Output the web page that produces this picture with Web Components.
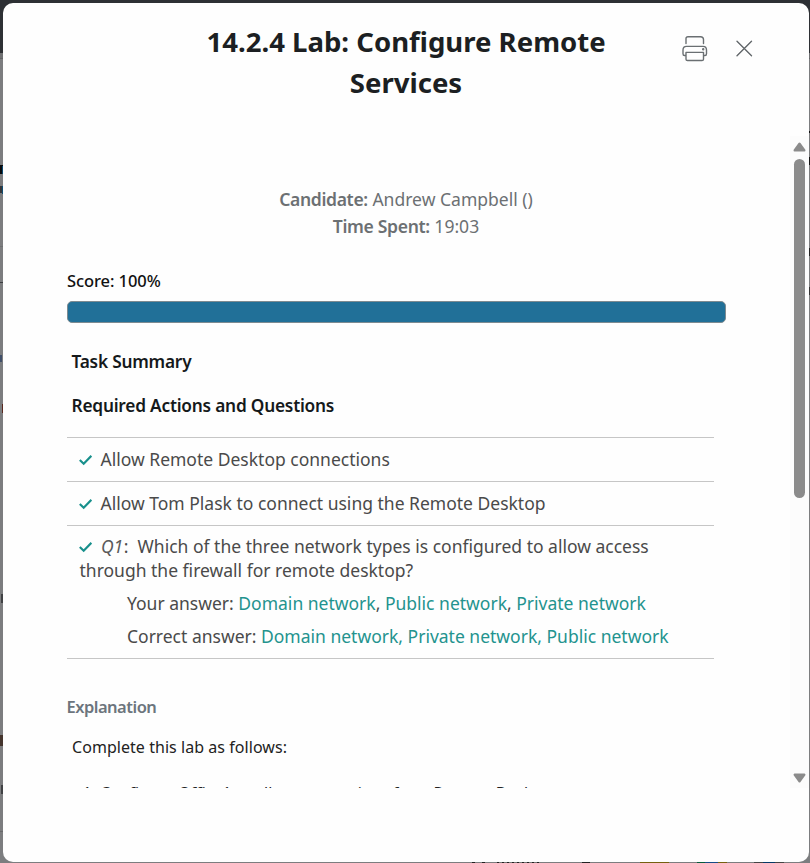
<!DOCTYPE html>
<html lang="en"><head><meta charset="utf-8"><title>Lab report</title>
<style>
html,body{margin:0;height:100%;overflow:hidden}
body{font-family:"Noto Sans","Open Sans",sans-serif;color:#111418}
lab-backdrop{width:810px;height:863px}
</style></head><body>
<lab-backdrop><lab-dialog>
<span slot="title">14.2.4 Lab: Configure Remote Services</span>
<candidate-info></candidate-info>
<score-bar></score-bar>
<task-summary>
<task-row>Allow Remote Desktop connections</task-row>
<task-row>Allow Tom Plask to connect using the Remote Desktop</task-row>
<question-row></question-row>
</task-summary>
<lab-explanation></lab-explanation>
</lab-dialog></lab-backdrop>
<script>
function define(name, html){
  customElements.define(name, class extends HTMLElement{
    constructor(){ super(); this.attachShadow({mode:'open'}).innerHTML = html; }
  });
}
define('lab-backdrop', `<style>
:host{display:block;position:relative;box-sizing:border-box;padding:3px 1px 1px 3px;overflow:hidden;
 background:linear-gradient(#2d3034 0 53px,#707173 53px 58px,#626365 58px 59px,#7c7d7f 59px)}
i{position:absolute;display:block}
</style>
<i style="left:0;top:165px;width:3px;height:9px;background:#080a0d"></i>
<i style="left:2px;top:166px;width:1px;height:8px;background:#08476e"></i>
<i style="left:0;top:186px;width:2px;height:7px;background:#34363a"></i>
<i style="left:2px;top:186px;width:1px;height:8px;background:#104e72"></i>
<i style="left:0;top:246px;width:3px;height:1px;background:#6e7072"></i>
<i style="left:0;top:282px;width:3px;height:1px;background:#3c3e40"></i>
<i style="left:0;top:355px;width:2px;height:7px;background:#404f69"></i>
<i style="left:2px;top:404px;width:1px;height:9px;background:#59271e"></i>
<i style="left:1px;top:594px;width:2px;height:9px;background:#404144"></i>
<i style="left:0;top:735px;width:3px;height:11px;background:#44352d"></i>
<i style="left:1px;top:785px;width:2px;height:9px;background:#404144"></i>
<i style="left:0;top:831px;width:3px;height:1px;background:#68696b"></i>
<i style="right:0;top:131px;width:1px;height:2px;background:#111"></i>
<i style="right:0;top:157px;width:1px;height:8px;background:#111"></i>
<i style="right:0;top:248px;width:1px;height:8px;background:#222"></i>
<i style="right:0;top:287px;width:1px;height:8px;background:#333"></i>
<i style="left:472px;bottom:0;width:3px;height:1px;background:#222"></i>
<i style="left:482px;bottom:0;width:3px;height:1px;background:#222"></i>
<i style="left:497px;bottom:0;width:42px;height:1px;background:repeating-linear-gradient(90deg,#222 0 2px,#777 2px 5px)"></i>
<i style="left:582px;bottom:0;width:8px;height:1px;background:#222"></i>
<i style="left:640px;bottom:0;width:29px;height:1px;background:#75600f"></i>
<i style="left:697px;bottom:0;width:8px;height:1px;background:#075c3b"></i>
<i style="left:705px;bottom:0;width:13px;height:1px;background:#174c86"></i>
<i style="left:718px;bottom:0;width:9px;height:1px;background:#75600f"></i>
<i style="left:754px;bottom:0;width:30px;height:1px;background:linear-gradient(90deg,#444 0 9px,#063966 9px 21px,#444 21px)"></i>
<slot></slot>`);
define('lab-dialog', `<style>
:host{display:flex;flex-direction:column;position:relative;box-sizing:border-box;height:859px;background:#fefefe;border-radius:10px;overflow:hidden}
header{display:grid;grid-template-columns:1fr 430px 1fr;height:133px;flex:none}
h1{grid-column:2;margin:18px 0 0;text-align:center;font-size:27.55px;line-height:41px;font-weight:700;color:#1c1f22}
nav{display:flex;gap:26px;padding:32px 0 0 60px}
main{display:flex;height:652px;flex:none}
section{flex:1;padding-left:64px;overflow:hidden}
</style>
<header><h1><slot name="title"></slot></h1><nav><print-icon></print-icon><close-icon></close-icon></nav></header>
<main><section><slot></slot></section><scroll-track></scroll-track></main>`);
define('print-icon', `<style>:host{display:block}svg{display:block}</style>
<svg width="28" height="28" viewBox="0 0 28 28" fill="none" stroke="#6a6f72" stroke-width="1.4" stroke-linecap="round" stroke-linejoin="round"><path d="M5 8.5V3.5Q5 1.7 7 1.7H19.5Q22.5 1.7 22.5 4.5V8.5M5 20.5H3.5Q2 20.5 2 18.7V15Q2 11.4 5.5 11.4H22Q25.5 11.4 25.5 15V18.7Q25.5 20.5 24 20.5H22.5M5 17.4H22.5V24.3Q22.5 25.5 21 25.5H6.5Q5 25.5 5 24.3Z"/><circle cx="22.2" cy="14.3" r=".5" fill="#6a6f72"/></svg>`);
define('close-icon', `<style>:host{display:block;padding-top:5px}svg{display:block}</style>
<svg width="18" height="18" viewBox="0 0 18 18" stroke="#63686b" stroke-width="1.4" stroke-linecap="round"><path d="M2 1.2 16.5 15.7M16.5 1.2 2 15.7"/></svg>`);
define('scroll-track', `<style>
:host{display:flex;flex-direction:column;align-items:center;width:19px;box-sizing:border-box;background:#fcfcfc;padding:6px 0 5px}
div{width:11px;height:339px;border-radius:6px;background:#8b8b8b;margin-top:7px}
svg{display:block}.d{margin-top:auto}</style>
<svg width="13" height="10"><path d="M5.5 1Q6.5 0 7.5 1L12.5 8Q12.5 9.5 11.5 9.5H1.5Q.5 9.5 .5 8Z" fill="#8b8b8b"/></svg><div></div>
<svg class="d" width="13" height="10"><path d="M5.5 9Q6.5 10 7.5 9L12.5 2Q12.5 .5 11.5 .5H1.5Q.5 .5 .5 2Z" fill="#8b8b8b"/></svg>`);
define('candidate-info', `<style>
:host{display:block;width:678px;text-align:center;padding-top:50px;font-size:17.55px;line-height:27px;color:#6c7073}
b{font-weight:600;letter-spacing:-.33px}</style>
<div><b>Candidate:</b> Andrew Campbell ()</div><div><b>Time Spent:</b> 19:03</div>`);
define('score-bar', `<style>
:host{display:block;padding-top:28px}p{margin:0 0 8px;font-size:16.5px;line-height:25px;font-weight:500;letter-spacing:-.08px;color:#111}
div{width:659px;height:22px;box-sizing:border-box;border:1px solid #7e8b91;border-radius:5px;background:#217098}</style>
<p>Score: 100%</p><div></div>`);
define('task-summary', `<style>
:host{display:block;width:647px;padding-top:17px}h2,h3{margin:0 0 0 4.5px;font-size:17.3px;line-height:44px;font-weight:600;letter-spacing:-.22px;color:#15191b}
h3{height:53px}</style><h2>Task Summary</h2><h3>Required Actions and Questions</h3><slot></slot>`);
const check = `<svg width="13" height="12" viewBox="0 0 13 12" fill="none" stroke="#18908c" stroke-width="2.2"><path d="M.8 6 4.7 9.7 12.4 1.8"/></svg>`;
define('task-row', `<style>
:host{display:flex;align-items:center;gap:8.5px;height:44px;box-sizing:border-box;border-top:1px solid #c6c6c6;padding:0 0 1px 12px;font-size:17.5px;line-height:24px;color:#4a4a4a}
svg{margin-top:2px}
</style>${check}<span><slot></slot></span>`);
define('question-row', `<style>
:host{display:block;height:134px;box-sizing:border-box;border:solid #c6c6c6;border-width:1px 0;padding:8px 0 0 12.5px;font-size:17.5px;line-height:24px;color:#4a4a4a}
.q{display:flex;align-items:center;white-space:pre}
svg{margin:2px 9px 0 -.5px}p{margin:0}.a{margin:9px 0 0 47.5px;white-space:nowrap}em{color:#5a5a5a;margin-right:.5px}b{font-weight:400;color:#23938e}</style>
<p class="q">${check}<em>Q1</em><span>:&nbsp; Which of the three network types is configured to allow access</span></p>
<p>through the firewall for remote desktop?</p>
<p class="a">Your answer: <b>Domain network</b>, <b>Public network</b>, <b>Private network</b></p>
<p class="a">Correct answer: <b>Domain network, Private network, Public network</b></p>`);
define('lab-explanation', `<style>
:host{display:block;padding-top:36px;font-size:15.95px;line-height:24px;color:#222}
h4{margin:0 0 0 -.5px;font-size:16.5px;font-weight:600;letter-spacing:-.5px;color:#6c757d}p{margin:16px 0 0 5px;font-size:16px;letter-spacing:.05px}
ol{margin:22px 0 0;padding-left:33px}</style><h4>Explanation</h4><p>Complete this lab as follows:</p>
<ol><li>Configure Office1 to allow connections from Remote Desktop</li></ol>`);
</script></body></html>
